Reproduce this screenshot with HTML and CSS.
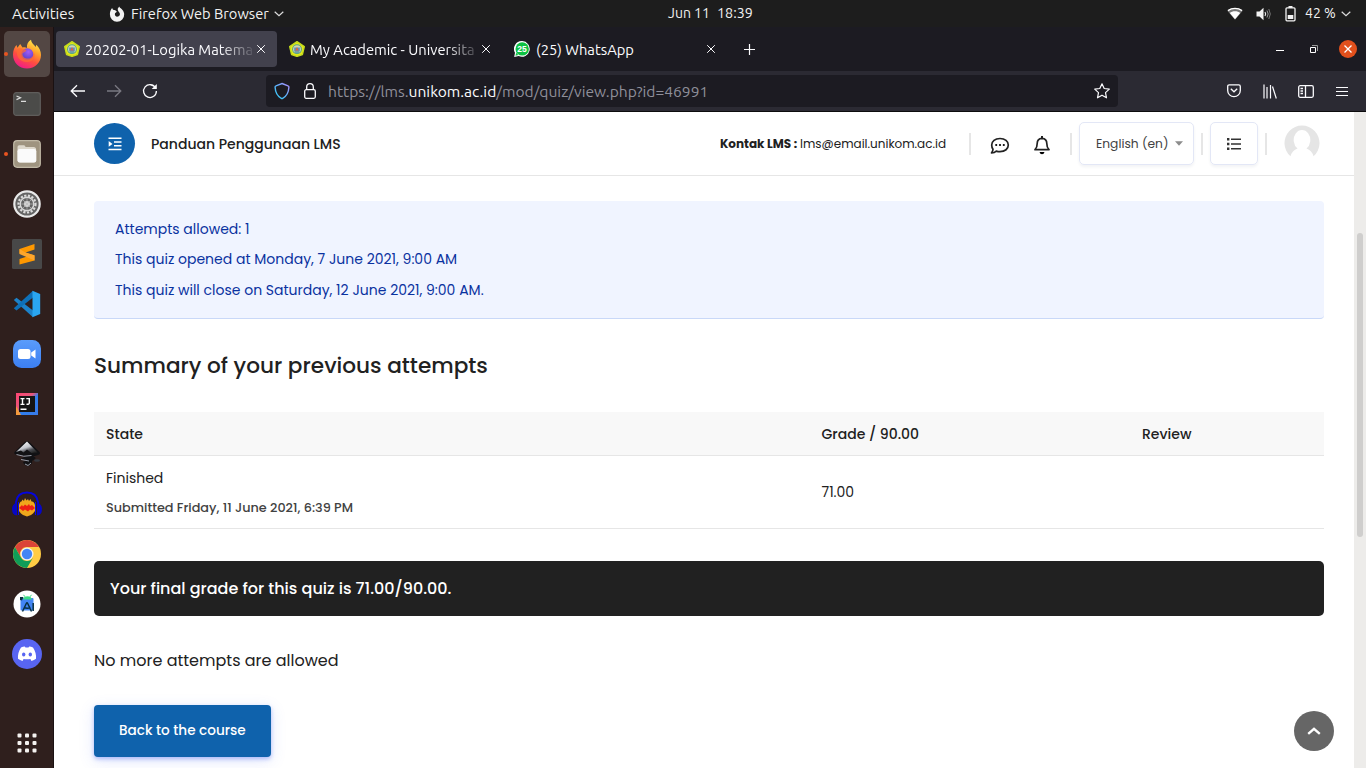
FILE: index.html
```html
<!DOCTYPE html>
<html lang="en">
<head>
<meta charset="utf-8">
<title>20202-01-Logika Matematika</title>
<link rel="stylesheet" href="styles.css">
</head>
<body>
<svg class="defs" width="0" height="0">
  <defs>
    <linearGradient id="fx" x1=".8" y1="0" x2=".3" y2="1"><stop offset="0" stop-color="#fff44f"/><stop offset=".35" stop-color="#ffa12b"/><stop offset=".65" stop-color="#ff4f3f"/><stop offset="1" stop-color="#f0198c"/></linearGradient>
    <radialGradient id="fxc" cx=".6" cy=".3" r=".8"><stop offset="0" stop-color="#a45cf5"/><stop offset="1" stop-color="#4a3bc0"/></radialGradient>
    <linearGradient id="ij" x1="0" y1="0" x2="1" y2="1"><stop offset="0" stop-color="#fe4573"/><stop offset=".4" stop-color="#e8567a"/><stop offset=".55" stop-color="#2f7ff0"/><stop offset="1" stop-color="#3a7be8"/></linearGradient>
    <linearGradient id="ink" x1=".2" y1="0" x2=".8" y2="1"><stop offset="0" stop-color="#fff"/><stop offset=".5" stop-color="#c4c7ce"/><stop offset=".75" stop-color="#4a4c52"/><stop offset="1" stop-color="#222"/></linearGradient>
    <linearGradient id="zm" x1="0" y1="0" x2="0" y2="1"><stop offset="0" stop-color="#5a9cfb"/><stop offset="1" stop-color="#3c7ff2"/></linearGradient>
    <linearGradient id="sh" x1="0" y1="1" x2="1" y2="0"><stop offset="0" stop-color="#2fd0f5"/><stop offset=".5" stop-color="#5fb0fa"/><stop offset="1" stop-color="#b18cff"/></linearGradient>
    <symbol id="crest" viewBox="0 0 16 16"><path d="M8 .7 15.300 5.600 13.400 13.600 8 15.400 2.600 13.600.7 5.600z" fill="#e6e61a" stroke="#c3dc1c" stroke-width="1.400" stroke-linejoin="round"/><circle cx="8" cy="8.200" r="4.900" fill="#4fa58c"/><circle cx="8" cy="8.200" r="3.900" fill="#d3d3b0"/><path d="M5.200 6.500h5.600v3.500H5.200z" fill="#5a8fc0"/><path d="M6.200 9.500 8 6l1.800 3.500z" fill="#e0653a"/><path d="M5.500 11h5" stroke="#2f7fa0" stroke-width="1.200"/></symbol>
    <symbol id="x" viewBox="0 0 10 10"><path d="m1.200 1.200 7.600 7.600m0-7.600-7.600 7.600" stroke="#fbfbfe" stroke-width="1" fill="none"/></symbol>
  </defs>
</svg>
<div class="desktop">
  <div class="topbar">
    <span class="t activities">Activities</span>
    <svg class="fxmono" width="16" height="16" viewBox="0 0 16 16"><path d="M8 15.700A7.300 7.300 0 0 1 .9 8.200C.8 5.700 1.900 3.200 3.100 1.900L4 3.800 6.300 4.300 7.900 5.800 6 7.200C5.400 9.500 7 11 9 10.600c1.800-.4 2.500-2.300 1.500-3.800C9.700 5.400 8.600 4.700 8.700 2.700L10.200.4C10.400 2 14.800 3 15.200 8a7.300 7.300 0 0 1-7.200 7.700z" fill="#f2f2f2"/></svg>
    <span class="t appname">Firefox Web Browser</span>
    <svg class="chev" width="10" height="6" viewBox="0 0 10 6"><path d="m.7.8 4.300 4L9.300.8" stroke="#ddd" stroke-width="1.200" fill="none"/></svg>
    <span class="t date">Jun 11</span><span class="t time">18:39</span>
    <svg class="wifi" width="16" height="14" viewBox="0 0 16 14"><path d="M.3 3.800C4.500.1 11.500.1 15.700 3.800L8 12.800z" fill="#777"/><path d="M1 3.600C5 .7 11 .7 15 3.600" stroke="#fff" stroke-width="1.300" fill="none"/><path d="M2.800 6C5 3.800 11 3.800 13.200 6L8 12.300z" fill="#fff"/></svg>
    <svg class="vol" width="16" height="14" viewBox="0 0 16 14"><path d="M.5 4.500h3L7.500.8v12.400L3.500 9.500h-3z" fill="#f2f2f2"/><path d="M9 5q1.300 2 0 4" stroke="#eee" stroke-width="1.200" fill="none"/><path d="M11 3.500q2.300 3.500 0 7" stroke="#999" fill="none"/><path d="M12.800 2q3 5 0 10" stroke="#777" fill="none"/></svg>
    <svg class="bat" width="11" height="16" viewBox="0 0 11 16"><path d="M3.500 0h4v2h-4z" fill="#f2f2f2"/><rect x="1" y="1.800" width="9" height="13" rx="1" stroke="#f2f2f2" stroke-width="1.300" fill="none"/><path d="M2.700 9h5.600v4H2.700z" fill="#f2f2f2"/></svg>
    <span class="t pct">42 %</span>
    <svg class="chev" width="10" height="6" viewBox="0 0 10 6"><path d="m.7.8 4.300 4L9.300.8" stroke="#ddd" stroke-width="1.200" fill="none"/></svg>
  </div>
  <div class="work">
    <div class="dock">
      <div class="app active running"><svg width="32" height="32" viewBox="0 0 32 32"><path d="M16 30.500C8 30.500 2 24.500 2 16.500c0-4 1.500-7.500 3.500-9.500l.9 2.700L9.200 6l2.300 3.500c2-.7 3.500-.2 4.500.6C15.500 6.500 17 3.500 20 1.800c.3 3.200 3 5 4.700 7.200l.6-2.200c3 3 4.700 6.500 4.700 10.200 0 7.500-6 13.500-14 13.500z" fill="url(#fx)"/><circle cx="16.300" cy="16.300" r="6" fill="url(#fxc)"/><path d="M6 11.500c3-2.300 7-1.300 9.500 1-1 1.800-4 1.800-4 3.700.2 4 5 5.500 8.500 3.500 2.500-1.500 3-3.500 2.500-6 2.500 4 .5 9.500-5.500 10.300C10 25 4.500 19 6 11.500z" fill="#ff6a35" opacity=".75"/></svg></div>
      <div class="app"><svg width="28" height="24" viewBox="0 0 28 24"><rect x=".7" y=".7" width="26.600" height="22.600" rx="2.500" fill="#4b4b49" stroke="#5f5d5b" stroke-width="1.200"/><path d="m3.500 4 4 1.800-4 1.800M8 9.300h5" stroke="#ddd" stroke-width="1.200" fill="none"/></svg></div>
      <div class="app running"><svg width="28" height="28" viewBox="0 0 28 28"><rect x=".7" y=".7" width="26.600" height="26.600" rx="3.500" fill="#9f9480" stroke="#c1b9a6" stroke-width="1.200"/><path d="M4.500 7q0-1.700 1.700-1.700H11q1 0 1.600 1.700h8q2.500 0 2.500 2.500V20q0 2.500-2.500 2.500H7.500Q4.500 22.500 4.500 20z" fill="#ded8cc"/><rect x="4.500" y="9" width="18.800" height="13.500" rx="2.200" fill="#fafafa"/></svg></div>
      <div class="app"><svg width="28" height="28" viewBox="0 0 28 28"><circle cx="14" cy="14" r="12.700" fill="#646464" stroke="#e9e9e9" stroke-width="2.200"/><circle cx="14" cy="14" r="8.500" fill="none" stroke="#dcdcdc" stroke-width="2.200" stroke-dasharray="2.200 1.500"/><circle cx="14" cy="14" r="6.800" fill="none" stroke="#d8d8d8" stroke-width="1.400"/><circle cx="14" cy="14" r="3" fill="#ddd"/><path d="M14 8v12M8 14h12M9.800 9.800l8.400 8.400m0-8.400-8.400 8.400" stroke="#bbb" stroke-width=".7"/></svg></div>
      <div class="app"><svg width="30" height="30" viewBox="0 0 30 30"><rect width="30" height="30" rx="1.500" fill="#484848"/><path d="M7.500 10 22.500 5v5.500l-9 3 9 3v5L7.500 25.500V20l9-3-9-2.500z" fill="#ff9800"/><path d="M7.500 10v5l15 6.500v-5.300l-9-2.700z" fill="#ffa62b"/></svg></div>
      <div class="app"><svg width="28" height="28" viewBox="0 0 28 28"><path d="m.8 10 2.700-2.300L20 20.500v6.700z" fill="#1c82ca"/><path d="m.8 18.200 2.700 2.300L20 7.500V.8z" fill="#0e70b8"/><path d="m19.500.7 7.700 3.300v20l-7.700 3.300z" fill="#2aa6f1"/></svg></div>
      <div class="app"><svg width="28" height="28" viewBox="0 0 28 28"><rect width="28" height="28" rx="8.500" fill="url(#zm)"/><rect x="5" y="9" width="12.500" height="10" rx="2.500" fill="#fff"/><path d="m18.200 12.500 4.300-3v9l-4.300-3z" fill="#fff"/></svg></div>
      <div class="app"><svg width="22" height="22" viewBox="0 0 22 22"><rect width="22" height="22" fill="url(#ij)"/><path d="M0 13v9h5z" fill="#f59a3c"/><rect x="3" y="3" width="16" height="16" fill="#151515"/><path d="M4.500 5.600h4M6.500 5.600v6M4.500 11.400h4M10.300 5.600h3V10q0 1.500-2.800 1.200M4.500 16.300h6" stroke="#fff" stroke-width="1.400" fill="none"/></svg></div>
      <div class="app"><svg width="28" height="28" viewBox="0 0 28 28"><path d="M14 1q1.500 0 2.800 1.500L26.500 12q1.500 2-1.500 3l-5 1.500q4 1 2 2.500l-3 2q1 3-4 5-4-.5-5-4l4-1.500-6-1.500 4-2.500-9-2q-3-1-1-3L11.200 2.500Q12.500 1 14 1z" fill="#111114"/><path d="M14 1.500 3 12l5-1.500 2.500 2 3.500-3 4.500 3.500 6-.5z" fill="url(#ink)"/><path d="M3.500 14.500q7 3 15 1M8 19.500l8 1.500M12 24l3 1.500 3-2.500" stroke="#969aa6" stroke-width="1" fill="none"/><ellipse cx="24" cy="20.500" rx="3" ry="1.200" fill="#343840"/></svg></div>
      <div class="app"><svg width="30" height="26" viewBox="0 0 30 26"><path d="M4 15V11C5 4 9 1.500 15 1.500S25 4 26 11v4" fill="none" stroke="#0505dd" stroke-width="1.800"/><path d="M7 14q1-4 2.500-3.500l1-2L12 10l1-3 1.500 2.500L16 8l1 2 1.500-2 1 2.500q2.500-.5 3.500 3.500v6l-2 2.500-2 1.500-4 1.500-4-1.500-2-1.500-2-2.500z" fill="#f0a81c"/><path d="m7 17 3-3 1 1.500 2-2 2 1.500 2-2 1 2 2-1 3 3-3 2.500-2-1-2 2-3-2-2 1.500-2-1.500z" fill="#ec2115"/><path d="M5 11.500v13q-5-.5-5-6.500 0-5 5-6.500zM25 11.500v13q5-.5 5-6.500 0-5-5-6.500z" fill="#0707c4"/><path d="M6.500 11v13M23.500 11v13" stroke="#0a0aef"/></svg></div>
      <div class="app"><svg width="28" height="28" viewBox="0 0 28 28"><circle cx="14" cy="14" r="14" fill="#fc4"/><path d="M1.900 7A14 14 0 0 1 26.100 7H14a7 7 0 0 0-6.100 10.500z" fill="#db4437"/><path d="M1.900 7A14 14 0 0 0 14 28l6.100-10.500a7 7 0 0 1-12.200 0z" fill="#0f9d58"/><circle cx="14" cy="14" r="6.500" fill="#f1f1f1"/><circle cx="14" cy="14" r="5.200" fill="#4285f4"/></svg></div>
      <div class="app"><svg width="28" height="28" viewBox="0 0 28 28"><circle cx="14" cy="14" r="13.500" fill="#fff"/><rect x="7.500" y="8" width="13" height="12.500" rx="1" fill="#4285f4"/><path d="M7 7h3.500l-1.500 3.500-2-.5z" fill="#073042"/><path d="M10 9.500c.5-4.500 8.500-4.500 9 0z" fill="#3ddc84"/><path d="m10.500 4.800 1.500 2m6.500-2-1.500 2" stroke="#3ddc84"/><path d="m9.500 21.500 3.800-8q.7-1.300 1.400 0l3.800 8M11 17.500q3.500 1.500 6.500 0M20.200 13v8" stroke="#073042" stroke-width="1.500" fill="none"/></svg></div>
      <div class="app"><svg width="30" height="30" viewBox="0 0 30 30"><circle cx="15" cy="15" r="15" fill="#5865f2"/><path d="M9 8.500q2-1 3.800-1.100l.7 1.100h3l.7-1.100Q19 7.500 21 8.500q3.500 5.300 3 11.200-2 1.600-4.500 2.200l-1.100-2q-3.400.9-6.800 0l-1.100 2Q8 21.300 6 19.700 5.500 13.800 9 8.500z" fill="#fff"/><ellipse cx="11.700" cy="15.500" rx="1.700" ry="1.900" fill="#5865f2"/><ellipse cx="18.300" cy="15.500" rx="1.700" ry="1.900" fill="#5865f2"/></svg></div>
      <div class="app launcher"><svg width="20" height="20" viewBox="0 0 20 20" fill="#f4f2f0"><rect x=".5" y=".5" width="4" height="4" rx="1"/><rect x="8" y=".5" width="4" height="4" rx="1"/><rect x="15.500" y=".5" width="4" height="4" rx="1"/><rect x=".5" y="8" width="4" height="4" rx="1"/><rect x="8" y="8" width="4" height="4" rx="1"/><rect x="15.500" y="8" width="4" height="4" rx="1"/><rect x=".5" y="15.500" width="4" height="4" rx="1"/><rect x="8" y="15.500" width="4" height="4" rx="1"/><rect x="15.500" y="15.500" width="4" height="4" rx="1"/></svg></div>
    </div>
    <div class="browser">
      <div class="tabs">
        <div class="tab selected"><svg width="16" height="16"><use href="#crest"/></svg><span class="t tabtitle fade">20202-01-Logika Matema</span><svg class="close" width="10" height="10"><use href="#x"/></svg></div>
        <div class="tab"><svg width="16" height="16"><use href="#crest"/></svg><span class="t tabtitle fade t2">My Academic - Universita</span><svg class="close" width="10" height="10"><use href="#x"/></svg></div>
        <div class="tab"><svg width="16" height="16" viewBox="0 0 16 16"><path d="M8.200.1a7.800 7.800 0 1 1-3.500 14.900L.2 16l.8-4.300A7.800 7.800 0 0 1 8.200.1z" fill="#fff"/><circle cx="8.200" cy="7.900" r="6.700" fill="#0dc143"/><path d="m1.500 14.800.6-3 2.300 2.300z" fill="#0dc143"/><text x="8.100" y="10.800" class="badge" text-anchor="middle">25</text></svg><span class="t tabtitle t3">(25) WhatsApp</span><svg class="close" width="10" height="10"><use href="#x"/></svg></div>
        <svg class="plus" width="12" height="12" viewBox="0 0 12 12"><path d="M6.500 1v11M1 6.500h11" stroke="#fbfbfe" stroke-width="1.200"/></svg>
        <svg class="min" width="8" height="2" viewBox="0 0 8 2"><path d="M0 .5h8" stroke="#fff"/></svg>
        <svg class="max" width="8" height="8" viewBox="0 0 8 8" fill="none"><path d="M.5 2.500h5v5h-5z" stroke="#fff"/><path d="M2 .5h5.500V6" stroke="#999"/></svg>
        <svg class="quit" width="18" height="18" viewBox="0 0 18 18"><circle cx="9" cy="9" r="9" fill="#e2501c"/><path d="m5.500 5.500 7 7m0-7-7 7" stroke="#fff" stroke-width="1.300"/></svg>
      </div>
      <div class="nav">
        <svg class="back" width="16" height="14" viewBox="0 0 16 14"><path d="M15 7H1.500M7 1.200 1.200 7 7 12.800" stroke="#fbfbfe" stroke-width="1.300" fill="none"/></svg>
        <svg class="fwd" width="16" height="14" viewBox="0 0 16 14"><path d="M1 7h13.500M9 1.200 14.800 7 9 12.800" stroke="#7a7982" stroke-width="1.300" fill="none"/></svg>
        <svg class="reload" width="16" height="16" viewBox="0 0 16 16"><path d="M13.600 5A6.400 6.400 0 1 0 14.400 8" stroke="#fbfbfe" stroke-width="1.300" fill="none"/><path d="M14.800.9V6H9.700z" fill="#fbfbfe"/></svg>
        <div class="url">
          <svg width="16" height="18" viewBox="0 0 16 18"><path d="m8 1.500 6 2.300q1 .3.900 1.500c-.3 5-2.300 9-6.200 11q-.7.400-1.400 0c-3.900-2-5.900-6-6.200-11Q1 4.100 2 3.800z" stroke="url(#sh)" stroke-width="1.400" fill="none"/></svg>
          <svg class="lock" width="12" height="16" viewBox="0 0 12 16"><rect x=".7" y="6.700" width="10.600" height="8.600" rx="1.500" stroke="#fbfbfe" stroke-width="1.300" fill="none"/><path d="M2.700 6.500V4a3.300 3.300 0 0 1 6.600 0v2.500" stroke="#fbfbfe" stroke-width="1.300" fill="none"/></svg>
          <span class="t urltext">https://lms.<b>unikom.ac.id</b>/mod/quiz/view.php?id=46991</span>
          <svg class="star" width="16" height="16" viewBox="0 0 16 16"><path d="m8 .8 2.200 4.700 5.100.6-3.800 3.500 1 5.200L8 12.200l-4.500 2.600 1-5.200L.7 6.100l5.100-.6z" stroke="#fbfbfe" stroke-width="1.200" stroke-linejoin="round" fill="none"/></svg>
        </div>
        <svg class="pocket" width="14" height="14" viewBox="0 0 14 14" fill="none" stroke="#fbfbfe" stroke-width="1.300"><path d="M2.200.9h9.600q1.500 0 1.500 1.500v4A6.300 6.300 0 0 1 .7 6.400v-4Q.7.900 2.200.9z"/><path d="m3.800 4.800 3.200 3 3.200-3"/></svg>
        <svg class="lib" width="14" height="15" viewBox="0 0 14 15" stroke="#fbfbfe" stroke-width="1.200"><path d="M1 .5v14M4 3v11.500M7.500 1v13.500M9.500 2.500l3.800 12"/></svg>
        <svg class="side" width="16" height="13" viewBox="0 0 16 13" fill="none" stroke="#fbfbfe" stroke-width="1.300"><rect x=".7" y=".7" width="14.600" height="11.600" rx="1.500"/><path d="M7.500.7v11.600M2.500 3.500H5M2.500 6H5M2.500 8.500H5"/></svg>
        <svg class="menu" width="12" height="11" viewBox="0 0 12 11" stroke="#fbfbfe"><path d="M0 1.500h12M0 5.500h12M0 9.500h12"/></svg>
      </div>
      <div class="viewport">
        <div class="page">
          <div class="header">
            <div class="toggle"><svg width="14" height="14" viewBox="0 0 14 14"><path d="M.5 1.200h13M6 5h7.500M6 8.700h7.500M.5 12.500h13" stroke="#fff" stroke-width="1.600"/><path d="m.7 4 3.800 2.900L.7 9.800z" fill="#fff"/></svg></div>
            <span class="t guide">Panduan Penggunaan LMS</span>
            <span class="t kontak">Kontak LMS :</span><span class="t mail">lms@email.unikom.ac.id</span>
            <i class="sep s1"></i>
            <svg class="chat" width="20" height="18" viewBox="0 0 20 18"><path d="M10 1.500c5 0 8.300 2.800 8.300 6.500s-3.300 6.700-8.300 6.700q-2 0-3.700-.6Q4.500 15.800 1.500 16 3 14 3 12.300 1.700 10.500 1.700 8C1.700 4.300 5 1.500 10 1.500z" fill="none" stroke="#212121" stroke-width="1.700" stroke-linejoin="round"/><circle cx="6.200" cy="8" r="1.100"/><circle cx="10" cy="8" r="1.100"/><circle cx="13.800" cy="8" r="1.100"/></svg>
            <svg class="bell" width="18" height="20" viewBox="0 0 18 20"><path d="M2 14.700q2.200-2 2.200-6.200Q4.200 3.500 9 3.300q4.800.2 4.800 5.200 0 4.200 2.200 6.200z" fill="none" stroke="#212121" stroke-width="1.700" stroke-linejoin="round"/><path d="M9 1v2" stroke="#212121" stroke-width="2"/><path d="M6.500 17h5q-.5 2.200-2.500 2.200T6.500 17z"/></svg>
            <i class="sep s2"></i>
            <div class="lang"><span class="t">English (en)</span><svg width="8" height="5" viewBox="0 0 8 5"><path d="M0 .3h8L4 4.700z" fill="#8c8c8c"/></svg></div>
            <i class="sep s3"></i>
            <div class="list"><svg width="14" height="12" viewBox="0 0 14 12"><path d="M4 1.300h10M4 6h10M4 10.700h10" stroke="#333" stroke-width="1.600"/><path d="M0 1.300h2.400M0 6h2.400M0 10.700h2.400" stroke="#333" stroke-width="2.400"/></svg></div>
            <i class="sep s4"></i>
            <svg class="avatar" width="36" height="36" viewBox="0 0 36 36"><path d="M6.500 31.300A17.500 17.500 0 1 1 29.500 31.300Q28 25.500 22.500 23.500A8.300 10 0 1 0 13.500 23.500Q8 25.500 6.500 31.300z" fill="#e5e5e5"/></svg>
          </div>
          <div class="content">
            <div class="info"><p>Attempts allowed: 1</p><p>This quiz opened at Monday, 7 June 2021, 9:00 AM</p><p>This quiz will close on Saturday, 12 June 2021, 9:00 AM.</p></div>
            <h2>Summary of your previous attempts</h2>
            <div class="table">
              <div class="row head"><span class="c-state">State</span><span class="c-grade">Grade / 90.00</span><span>Review</span></div>
              <div class="row"><div class="cell"><span>Finished</span><span class="c-sub">Submitted Friday, 11 June 2021, 6:39 PM</span></div><span>71.00</span></div>
            </div>
            <div class="final">Your final grade for this quiz is 71.00/90.00.</div>
            <p class="nomore">No more attempts are allowed</p>
            <div class="button">Back to the course</div>
          </div>
          <div class="totop"><svg width="14" height="8" viewBox="0 0 14 8"><path d="m1.200 6.800 5.800-5 5.800 5" stroke="#fff" stroke-width="2.400" fill="none"/></svg></div>
        </div>
        <div class="scroll"><i></i></div>
      </div>
    </div>
  </div>
</div>
</body>
</html>
```
FILE: styles.css
```css
* { box-sizing: border-box; }
body { margin: 0; width: 1366px; height: 768px; overflow: hidden; font-family: Poppins, Inter, sans-serif; color: #212121; }
svg { display: block; flex: none; }
p, h2 { margin: 0; font-weight: 400; }
.defs { position: absolute; }
.t { white-space: pre; display: inline-block; flex: none; }
.desktop { display: flex; flex-direction: column; height: 768px; }
.topbar { height: 27px; background: #1d1d1d; display: flex; align-items: center; color: #f2f2f2; font: 14px/27px Ubuntu, "Open Sans", sans-serif; padding-left: 12px; }
.activities { width: 63px; font-size: 15.200px; }
.fxmono { margin-left: 34px; }
.appname { width: 138px; margin-left: 6px; font-size: 14.667px; }
.topbar .chev { margin-left: 5px; }
.date { width: 42px; margin-left: 384px; }
.time { width: 36px; margin-left: 7px; font-size: 14.300px; }
.wifi { margin-left: 474px; }
.vol { margin-left: 13px; }
.bat { margin-left: 13px; }
.pct { width: 31px; margin-left: 9px; }
.work { flex: 1; display: flex; min-height: 0; }
.dock { width: 54px; background: #2f1f1d; border-right: 1px solid #1a1112; display: flex; flex-direction: column; padding-top: 2px; }
.app { height: 50px; width: 54px; display: flex; align-items: center; justify-content: center; position: relative; flex: none; }
.active { background: #534744; height: 46px; width: 46px; margin: 2px 4px; border-radius: 5px; }
.running::before { content: ""; position: absolute; left: 4px; width: 4px; height: 4px; border-radius: 50%; background: #e95420; }
.active.running::before { left: 0; }
.launcher { margin-top: auto; }
.browser { flex: 1; display: flex; flex-direction: column; min-width: 0; }
.tabs { height: 44px; background: #1c1b22; display: flex; align-items: center; padding-left: 2px; color: #fbfbfe; font: 14.750px/20px Ubuntu, "Open Sans", sans-serif; }
.tab { width: 221px; height: 36px; margin-right: 4px; border-radius: 4px; display: flex; align-items: center; padding-left: 8px; }
.selected { background: #42414d; }
.tabtitle { width: 168px; margin-left: 5px; padding-top: 1px; }
.t3 { margin-left: 6px; width: 167px; }
.fade { -webkit-mask-image: linear-gradient(90deg, #000 135px, transparent 172px); mask-image: linear-gradient(90deg, #000 135px, transparent 172px); }
.close { margin-left: 3px; }
.badge { font: bold 8.500px "Liberation Sans", sans-serif; fill: #fff; }
.plus { margin-left: 12px; }
.min { margin-left: 521px; margin-top: 3px; }
.max { margin-left: 26px; }
.quit { margin-left: 21px; }
.nav { height: 41px; background: #2b2a33; border-bottom: 1px solid #0c0c0d; display: flex; align-items: center; padding-left: 16px; }
.fwd { margin-left: 20px; }
.reload { margin-left: 20px; }
.url { width: 852px; height: 32px; margin-left: 108px; background: #1c1b22; border-radius: 4px; display: flex; align-items: center; padding-left: 8px; }
.lock { margin-left: 14px; }
.urltext { width: 380px; margin-left: 12px; color: #8f8f9a; font: 15.600px/20px Ubuntu, "Open Sans", sans-serif; padding-bottom: 1px; }
.urltext b { font-weight: 400; color: #fbfbfe; }
.star { margin-left: 386px; }
.pocket { margin-left: 109px; }
.lib { margin-left: 22px; }
.side { margin-left: 21px; }
.menu { margin-left: 22px; }
.viewport { flex: 1; display: flex; background: #fff; min-height: 0; }
.page { width: 1300px; position: relative; }
.scroll { width: 12px; background: #edecea; padding: 121px 3px 0; }
.scroll i { display: block; width: 6px; height: 304px; border-radius: 3px; background: #cfcecd; }
.header { height: 64px; border-bottom: 1px solid #e6e6e6; display: flex; align-items: center; padding-left: 40px; }
.toggle { width: 41px; height: 41px; border-radius: 50%; background: #0f62ac; display: flex; align-items: center; justify-content: center; }
.guide { width: 190px; margin-left: 16px; padding-top: 2px; font-size: 14px; font-weight: 500; }
.kontak { width: 77px; margin-left: 379px; font-size: 12px; font-weight: 700; }
.mail { width: 146px; margin-left: 3px; font-size: 12px; }
.sep { width: 2px; height: 22px; background: #e6e6e6; flex: none; }
.s1 { margin-left: 23px; }
.chat { margin: 4px 0 0 19px; }
.bell { margin: 3px 0 0 23px; }
.s2 { margin-left: 19px; }
.lang, .list { height: 43px; border: 1px solid #e3e7f6; border-radius: 5px; box-shadow: 0 2px 3px rgba(40, 50, 90, .06); display: flex; align-items: center; }
.lang { width: 115px; margin-left: 7px; padding-left: 16px; font-size: 12.250px; color: #424242; }
.lang .t { width: 72px; margin-right: 7px; }
.s3 { margin-left: 7px; }
.list { width: 48px; margin-left: 7px; justify-content: center; }
.s4 { margin-left: 7px; }
.avatar { margin: -2px 0 0 17px; }
.content { padding: 25px 30px 0 40px; }
.info { height: 118px; border-radius: 4px; background: #f0f4ff; border-bottom: 1px solid #c9d8f8; padding: 13px 21px; color: #0a32a0; font-size: 14px; line-height: 30px; }
.info p + p + p { margin-top: 1px; }
h2 { margin-top: 30px; font-size: 21.600px; line-height: 34px; font-weight: 500; }
.table { margin-top: 29px; }
.row { display: flex; align-items: center; height: 73px; padding-left: 12px; border-bottom: 1px solid #e6e6e6; font-size: 14px; }
.head { height: 44px; padding-top: 2px; background: #f8f8f8; font-weight: 500; }
.c-state, .cell { width: 715.500px; }
.c-grade { width: 320.500px; }
.cell { display: flex; flex-direction: column; padding-top: 2px; line-height: 30px; }
.c-sub { font-size: 12.800px; font-weight: 500; color: #424242; }
.final { margin-top: 32px; height: 55px; border-radius: 5px; background: #212121; color: #fff; padding-left: 16px; line-height: 56px; font-size: 16px; font-weight: 500; }
.nomore { margin-top: 32px; font-size: 16px; line-height: 25px; }
.button { margin-top: 32px; width: 177px; height: 52px; border-radius: 4px; background: #0f62ac; color: #fff; padding-left: 25px; line-height: 52px; font-size: 13.600px; font-weight: 500; box-shadow: 0 2px 4px rgba(70, 100, 240, .4), 0 4px 16px rgba(70, 100, 240, .15); }
.totop { position: absolute; left: 1240px; top: 599px; width: 40px; height: 40px; border-radius: 50%; background: #666; display: flex; align-items: center; justify-content: center; }
```
